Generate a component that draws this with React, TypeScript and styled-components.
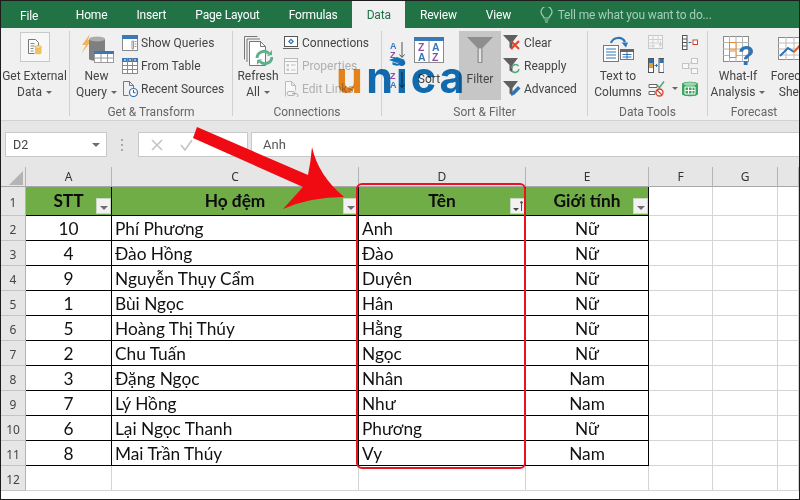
import styled, { createGlobalStyle } from 'styled-components'

const GlobalStyle = createGlobalStyle`
  html, body {
    margin: 0;
    padding: 0;
    background: #fff;
  }
`

const Page = styled.div`
  position: relative;
  box-sizing: border-box;
  width: 800px;
  height: 500px;
  border: 1px solid #1c1c1c;
  overflow: hidden;
  background: #fff;
  font-family: Roboto, 'Noto Sans', sans-serif;
`

// tabs

const TabBar = styled.div`
  display: flex;
  align-items: stretch;
  height: 27px;
  background: #217346;
  font-size: 12px;
  letter-spacing: -0.15px;
`

const Tab = styled.div<{ $active?: boolean; $first?: boolean }>`
  display: flex;
  align-items: center;
  padding: ${(p) => (p.$first ? '2px 19px 0 19px' : '0 14.5px')};
  margin-right: ${(p) => (p.$first ? '4px' : '0')};
  color: ${(p) => (p.$active ? '#217346' : '#fff')};
  background: ${(p) => (p.$active ? '#f0f0f0' : 'transparent')};
`

const TellMe = styled.div`
  display: flex;
  align-items: center;
  gap: 5px;
  margin-left: 14px;
  color: #a6cdb8;
`

// ribbon

const Ribbon = styled.div`
  display: flex;
  height: 93px;
  box-sizing: border-box;
  background: #f0f0f0;
  border-bottom: 1px solid #d2d2d2;
  color: #444;
  font-size: 12px;
`

const Group = styled.div<{ $w: number }>`
  position: relative;
  display: flex;
  flex-direction: column;
  flex: 0 0 auto;
  box-sizing: border-box;
  width: ${(p) => p.$w}px;
  margin: 3px 0 4px;
  border-right: 1px solid #d0d0d0;
  &:last-child {
    border-right: none;
    flex: 1 0 auto;
  }
`

const GroupBody = styled.div`
  display: flex;
  flex: 1;
  align-items: flex-start;
  white-space: nowrap;
`

const GroupLabel = styled.div`
  height: 15px;
  margin-bottom: -4px;
  line-height: 15px;
  text-align: center;
  color: #666;
  font-size: 12px;
`

const LargeButton = styled.div<{ $w: number; $ml?: number; $active?: boolean }>`
  display: flex;
  flex-direction: column;
  align-items: center;
  flex: 0 0 auto;
  width: ${(p) => p.$w}px;
  height: 69px;
  margin-left: ${(p) => p.$ml ?? 0}px;
  background: ${(p) => (p.$active ? '#c6c6c6' : 'transparent')};
  line-height: 16px;
`

const IconSlot = styled.div<{ $h?: number; $top?: number }>`
  display: flex;
  align-items: flex-start;
  justify-content: center;
  box-sizing: border-box;
  height: ${(p) => p.$h ?? 40}px;
  padding-top: ${(p) => p.$top ?? 2}px;
`

const ExternalBox = styled.div`
  display: flex;
  align-items: center;
  justify-content: center;
  width: 30px;
  height: 30px;
  box-sizing: border-box;
  border: 1px solid #c8c8c8;
  background: #f7f7f7;
`

const Caret = styled.span`
  display: inline-block;
  width: 0;
  height: 0;
  margin-left: 4px;
  vertical-align: 2px;
  border-left: 3px solid transparent;
  border-right: 3px solid transparent;
  border-top: 3px solid #666;
`

const SmallColumn = styled.div<{ $ml?: number }>`
  display: flex;
  flex-direction: column;
  margin-left: ${(p) => p.$ml ?? 0}px;
`

const SmallRow = styled.div<{ $muted?: boolean }>`
  display: flex;
  align-items: center;
  gap: 3px;
  height: 23px;
  color: ${(p) => (p.$muted ? '#b0b0b0' : '#444')};
  svg {
    flex: 0 0 auto;
  }
`

const SortColumn = styled.div`
  display: flex;
  flex-direction: column;
  gap: 12px;
  margin: 10px 6px 0 8px;
`

const IconGrid = styled.div`
  display: grid;
  grid-template-columns: 24px 10px 16px;
  grid-auto-rows: 23px;
  align-items: center;
  justify-items: start;
`

const MiniCaret = styled(Caret)`
  margin-left: 0;
`

// unica watermark over the ribbon

const Logo = styled.div`
  position: absolute;
  left: 335px;
  top: 48px;
  display: flex;
  font-family: Inter, 'Noto Sans', sans-serif;
  font-weight: 700;
  font-size: 43px;
  line-height: 56px;
  letter-spacing: 3px;
  color: #1271b8;
  mix-blend-mode: multiply;
`

const LogoU = styled.span`
  color: #f28a1e;
  margin-right: 0.5px;
`

const LogoHat = styled.svg`
  position: absolute;
  left: 388px;
  top: 56px;
`

// formula bar

const FormulaBar = styled.div`
  display: flex;
  align-items: stretch;
  height: 46px;
  box-sizing: border-box;
  padding: 11px 0 10px 4px;
  background: #e6e6e6;
  font-size: 12.5px;
  color: #444;
`

const NameBox = styled.div`
  display: flex;
  align-items: center;
  justify-content: space-between;
  box-sizing: border-box;
  width: 102px;
  padding: 0 6px 0 7px;
  background: #fff;
  border: 1px solid #c8c8c8;
`

const Grip = styled.div`
  width: 31px;
  display: flex;
  align-items: center;
  justify-content: center;
`

const FormulaButtons = styled.div`
  display: flex;
  align-items: center;
  gap: 17px;
  box-sizing: border-box;
  width: 110px;
  padding-left: 12px;
  margin-right: 3px;
  background: #fff;
  border: 1px solid #c8c8c8;
`

const FormulaInput = styled.div`
  flex: 1;
  display: flex;
  align-items: center;
  padding-left: 11px;
  background: #fff;
  border: 1px solid #c8c8c8;
  border-right: none;
  color: #555;
  font-size: 13px;
`

// sheet

const Sheet = styled.div`
  display: grid;
  grid-template-columns: 25px 86px 247px 167px 123px 64px 65px 1fr;
  grid-template-rows: 20px 29px repeat(11, 25px);
  font-family: Lato, 'Noto Sans', sans-serif;
  font-size: 17.3px;
  color: #111;
`

const Corner = styled.div`
  display: flex;
  align-items: flex-end;
  justify-content: flex-end;
  box-sizing: border-box;
  padding: 0 2px 1px 0;
  background: #e6e6e6;
  border-right: 1px solid #b4b4b4;
  border-bottom: 1px solid #a8a8a8;
`

const ColHead = styled.div`
  display: flex;
  align-items: center;
  justify-content: center;
  box-sizing: border-box;
  background: #e6e6e6;
  border-right: 1px solid #b4b4b4;
  border-bottom: 1px solid #a8a8a8;
  font-family: 'Noto Sans', sans-serif;
  font-size: 12px;
  color: #333;
`

const RowHead = styled.div`
  display: flex;
  align-items: center;
  justify-content: center;
  box-sizing: border-box;
  padding-top: 2px;
  background: #e6e6e6;
  border-right: 1px solid #b4b4b4;
  border-bottom: 1px solid #c4c4c4;
  font-family: 'Noto Sans', sans-serif;
  font-size: 12px;
  color: #444;
`

const HeadCell = styled.div`
  position: relative;
  display: flex;
  align-items: center;
  justify-content: center;
  box-sizing: border-box;
  padding-bottom: 1px;
  background: #70ad47;
  border-right: 1px solid #000;
  border-bottom: 1px solid #000;
  font-weight: 700;
  color: #0c0c0c;
`

const DataCell = styled.div<{ $center?: boolean }>`
  display: flex;
  align-items: center;
  justify-content: ${(p) => (p.$center ? 'center' : 'flex-start')};
  box-sizing: border-box;
  padding-left: ${(p) => (p.$center ? 0 : 3)}px;
  background: #fff;
  border-right: 1px solid #000;
  border-bottom: 1px solid #000;
`

const EmptyCell = styled.div`
  box-sizing: border-box;
  border-right: 1px solid #d4d4d4;
  border-bottom: 1px solid #d4d4d4;
`

const FilterButton = styled.div`
  position: absolute;
  right: 0;
  bottom: 1px;
  display: flex;
  align-items: center;
  justify-content: center;
  gap: 1px;
  box-sizing: border-box;
  width: 15px;
  height: 16px;
  background: #f2f2f2;
  border: 1px solid #c9d6c0;
`

const FilterCaret = styled.span`
  width: 0;
  height: 0;
  margin-top: 3px;
  border-left: 4px solid transparent;
  border-right: 4px solid transparent;
  border-top: 4px solid #6e6e6e;
`

const NameCaret = styled(FilterCaret)`
  margin-top: 0;
`

const SortedCaret = styled(FilterCaret)`
  margin-top: 7px;
  border-left-width: 3px;
  border-right-width: 3px;
  border-top-width: 3px;
  border-top-color: #444;
`

// drawn annotations, they lie over the sheet

const Annotation = styled.svg`
  position: absolute;
  left: 0;
  top: 0;
  pointer-events: none;
`

const Highlight = styled.div`
  position: absolute;
  left: 355px;
  top: 182px;
  width: 170px;
  height: 286px;
  box-sizing: border-box;
  border: 2px solid #e8131f;
  border-radius: 6px;
  pointer-events: none;
`

// ribbon icons

const blue = '#3b78b8'
const pale = '#c4c4c4'

const IconExternal = () => (
  <svg width="18" height="18" viewBox="0 0 18 18">
    <path d="M2.5 1.5h7l3 3v4M2.5 1.5v14h6" fill="#fff" stroke="#777" />
    <path d="M4.5 5.5h4M4.5 8h4M4.5 10.5h3M4.5 13h3" stroke="#888" />
    <path d="M9 9v6.5c0 1 6.5 1 6.5 0V9z" fill="#efc25e" />
    <ellipse cx="12.2" cy="9" rx="3.3" ry="1.5" fill="#f7d88f" stroke="#e0ab3f" strokeWidth="0.6" />
  </svg>
)

const IconNewQuery = () => (
  <svg width="34" height="30" viewBox="0 0 34 30">
    <path d="M10 1 2 12h4L1 21 12 7H8z" fill="#f1b460" />
    <path d="M9 6v20c0 2.4 16 2.4 16 0V6z" fill="#7f7f7f" />
    <ellipse cx="17" cy="6" rx="8" ry="2.6" fill="#adadad" />
    <rect x="14.5" y="18.5" width="19" height="11" fill="#fff" stroke="#9a9a9a" />
    <rect x="14" y="18" width="20" height="3" fill={blue} />
    <path d="M21 21v8M27.5 21v8M15 25h18" stroke="#9a9a9a" />
  </svg>
)

const IconShowQueries = () => (
  <svg width="16" height="16" viewBox="0 0 16 16">
    <rect x="0.5" y="1.5" width="15" height="14" fill="#fff" stroke="#8a8a8a" />
    <rect x="0" y="0" width="16" height="4" fill={blue} />
    <path d="M10 6h1.5v8H10zM12.5 6.5h2M12.5 9h2M12.5 11.5h2" stroke="#999" fill="none" />
  </svg>
)

const IconFromTable = () => (
  <svg width="16" height="16" viewBox="0 0 16 16">
    <rect x="0.5" y="0.5" width="15" height="15" fill="#fff" stroke="#8a8a8a" />
    <rect x="0" y="0" width="16" height="4" fill={blue} />
    <path d="M5.5 0v16M10.5 0v16M0 7.5h16M0 11.5h16" stroke="#8a8a8a" />
    <path d="M2 2h2M7 2h2M12 2h2" stroke="#fff" />
  </svg>
)

const IconRecent = () => (
  <svg width="16" height="16" viewBox="0 0 16 16">
    <path d="M1.5 14.5V.5h6l4 4v3M7.5.5v4h4M1.5 14.5h5" fill="none" stroke="#777" />
    <circle cx="11.5" cy="11.5" r="4" fill="#fff" stroke="#2f75b5" strokeWidth="1.2" />
    <path d="M11.5 9v2.7h2" fill="none" stroke="#555" />
  </svg>
)

const IconRefresh = () => (
  <svg width="30" height="32" viewBox="0 0 30 32">
    <path d="M1.5 1.5h13M1.5 1.5v23M4 4h13M4 4v23" fill="none" stroke="#777" />
    <path d="M6.5 6.5h11l5 5v19h-16z" fill="#fff" stroke="#777" />
    <path d="M17.5 6.5v5h5" fill="none" stroke="#777" />
    <path d="M14 23a7 7 0 0 1 12-4.5" fill="none" stroke="#5fb08a" strokeWidth="3" />
    <path d="M29 22a7 7 0 0 1-12 4.5" fill="none" stroke="#5fb08a" strokeWidth="3" />
    <path d="M24 21l5-1v-5zM19 24l-5 1v5z" fill="#5fb08a" />
  </svg>
)

const IconConnections = () => (
  <svg width="16" height="16" viewBox="0 0 16 16">
    <rect x="1.5" y="1.5" width="13" height="10" fill="#fff" stroke="#555" />
    <path d="M8 3.5 11 6.5 8 9.5 5 6.5z" fill="#2f75b5" />
    <circle cx="8" cy="6.5" r="1" fill="#fff" />
    <path d="M0 13.5h16" stroke="#666" />
  </svg>
)

const IconProperties = () => (
  <svg width="16" height="16" viewBox="0 0 16 16">
    <rect x="1.5" y="0.5" width="13" height="15" fill="#f8f8f8" stroke="#bcbcbc" />
    <path d="M1.5 3.5h13" stroke="#bcbcbc" />
    <rect x="3.5" y="6" width="2.5" height="2.5" fill="#c8c8c8" />
    <rect x="3.5" y="10.5" width="2.5" height="2.5" fill="#c8c8c8" />
    <path d="M8 7h4.5M8 12h4.5" stroke="#c0c0c0" />
  </svg>
)

const IconEditLinks = () => (
  <svg width="16" height="16" viewBox="0 0 16 16">
    <path d="M2.5 15.5V.5h6l4 4v5M8.5.5v4h4" fill="#f8f8f8" stroke="#bcbcbc" />
    <path d="M6 10.5h4a2 2 0 0 1 0 4H6a2 2 0 0 1 0-4zM9 12.5h4a2 2 0 0 1 0 4H9" fill="none" stroke="#b0b0b0" />
  </svg>
)

const SortSmall = ({ top, bottom }: { top: string; bottom: string }) => (
  <svg width="16" height="18" viewBox="0 0 16 18" fontFamily="Liberation Sans, sans-serif" fontWeight="700" fontSize="9">
    <text x="0" y="8" fill={top === 'A' ? blue : '#8e4ea5'}>{top}</text>
    <text x="0" y="17" fill={bottom === 'A' ? blue : '#8e4ea5'}>{bottom}</text>
    <path d="M12 1v15M9.5 13.5 12 16.5 14.5 13.5" fill="none" stroke="#555" />
  </svg>
)

const IconSortBig = () => (
  <svg width="30" height="26" viewBox="0 0 30 26" fontFamily="Liberation Sans, sans-serif" fontWeight="700" fontSize="10.5">
    <rect x="0.5" y="0.5" width="29" height="25" fill="#fff" stroke="#8a8a8a" />
    <rect x="0" y="0" width="30" height="4" fill={blue} />
    <path d="M15 4v22" stroke="#8a8a8a" />
    <text x="4" y="14" fill="#8e4ea5">Z</text>
    <text x="4" y="24" fill={blue}>A</text>
    <text x="18" y="14" fill={blue}>A</text>
    <text x="18" y="24" fill="#8e4ea5">Z</text>
  </svg>
)

const IconFunnel = () => (
  <svg width="28" height="28" viewBox="0 0 28 28">
    <path d="M1 1h26L16.5 12v15h-5V12z" fill="#8e8e8e" />
    <path d="M12.8 12.5v13.5h2.4V12.5z" fill="#e4e4e4" />
  </svg>
)

const SmallFunnel = () => <path d="M0 1h15L9.5 8v7.5l-3-2V8z" fill="#5f5f5f" />

const IconClear = () => (
  <svg width="18" height="17" viewBox="0 0 18 17">
    <SmallFunnel />
    <path d="M8 7l8 8M16 7l-8 8" stroke="#e0442a" strokeWidth="2" />
  </svg>
)

const IconReapply = () => (
  <svg width="18" height="17" viewBox="0 0 18 17">
    <SmallFunnel />
    <path d="M8.5 11a4 4 0 0 1 7-2M16 12a4 4 0 0 1-7 2" fill="none" stroke="#4fa77c" strokeWidth="1.6" />
  </svg>
)

const IconAdvanced = () => (
  <svg width="18" height="17" viewBox="0 0 18 17">
    <SmallFunnel />
    <path d="M8 16l1-4 6-6 2.5 2.5-6 6z" fill="#2f75b5" />
  </svg>
)

const IconTextColumns = () => (
  <svg width="31" height="26" viewBox="0 0 31 26">
    <path d="M8 7c2-6 11-7 14-1" fill="none" stroke="#2f75b5" strokeWidth="2.2" />
    <path d="M18.5 6.5h6.500l-2 5z" fill="#2f75b5" />
    <rect x="0.5" y="9.5" width="15" height="16" fill="#fff" stroke="#777" />
    <path d="M3 13h10M3 16h10M3 19h10M3 22h10" stroke="#2f75b5" />
    <rect x="17.5" y="13.5" width="13" height="10" fill="#fff" stroke="#777" />
    <rect x="17" y="13" width="14" height="3" fill="#666" />
    <path d="M24 16v7M19.5 18.5h9M19.5 21h9" stroke="#2f75b5" />
  </svg>
)

const IconFlash = () => (
  <svg width="16" height="15" viewBox="0 0 16 15">
    <rect x="0.5" y="0.5" width="14" height="13" fill="#f6f6f6" stroke="#c8c8c8" />
    <path d="M0 4.5h15M0 8h10M0 11h7M5 0v14M10 0v8" stroke="#d0d0d0" />
    <path d="M13 5l-3 5h2l-1 4 4-6h-2z" fill="#d4d4d4" />
  </svg>
)

const IconDuplicates = () => (
  <svg width="16" height="15" viewBox="0 0 16 15">
    <rect x="0.5" y="0.5" width="5" height="14" fill="#fff" stroke="#555" />
    <rect x="11" y="0.5" width="5" height="14" fill="#fff" stroke="#555" />
    <rect x="1" y="1" width="4" height="4" fill="#2f6fb0" />
    <rect x="1" y="5" width="4" height="5" fill="#d9a03f" />
    <rect x="11.5" y="1" width="4" height="4" fill="#2f6fb0" />
    <path d="M6.5 7.5h3M8 6l1.5 1.5L8 9" fill="none" stroke="#2f75b5" />
  </svg>
)

const IconValidation = () => (
  <svg width="17" height="16" viewBox="0 0 17 16">
    <path d="M1 3.5h8v3H1zM1 10.5h6v3H1z" fill="#fff" stroke="#666" />
    <path d="M9 4l2.5 2.5L16 .5" fill="none" stroke="#4fa77c" strokeWidth="1.5" />
    <circle cx="11.5" cy="11.5" r="3.5" fill="#fff" stroke="#d8412a" strokeWidth="1.3" />
    <path d="M9 9l5 5" stroke="#d8412a" strokeWidth="1.3" />
  </svg>
)

const IconConsolidate = () => (
  <svg width="16" height="15" viewBox="0 0 16 15">
    <rect x="0.5" y="0.5" width="4.5" height="14" fill="#fff" stroke="#555" />
    <path d="M0 4h5M0 7.5h5M0 11h5" stroke="#555" />
    <path d="M6.5 7.5h3" stroke="#2f75b5" />
    <rect x="11" y="5" width="4.5" height="4.5" fill="#fff" stroke="#d8412a" />
  </svg>
)

const IconRelations = () => (
  <svg width="16" height="16" viewBox="0 0 16 16">
    <rect x="0.5" y="5.5" width="6" height="5" fill="#f8f8f8" stroke={pale} />
    <rect x="9.5" y="0.5" width="6" height="5" fill="#f8f8f8" stroke={pale} />
    <rect x="9.5" y="10.5" width="6" height="5" fill="#f8f8f8" stroke={pale} />
    <path d="M6.5 7 9.5 4M6.5 9 9.5 12" stroke={pale} />
  </svg>
)

const IconDataModel = () => (
  <svg width="16" height="16" viewBox="0 0 16 16">
    <path d="M0 3c0-3 16-3 16 0v10c0 3-16 3-16 0z" fill="#3ea560" />
    <ellipse cx="8" cy="3" rx="6.5" ry="1.8" fill="#9ed6ae" />
    <path d="M3 6h10v7H3zM6.5 6v7M10 6v7M3 9.5h10" fill="none" stroke="#fff" />
  </svg>
)

const IconWhatIf = () => (
  <svg width="31" height="30" viewBox="0 0 31 30" fontFamily="Liberation Sans, sans-serif" fontWeight="700">
    <rect x="0.5" y="0.5" width="25" height="25" fill="#fff" stroke="#8a8a8a" />
    <path d="M6.5 0v26M13 0v26M19.5 0v26M0 6.5h26M0 13h26M0 19.5h26" stroke="#b4b4b4" />
    <rect x="6.5" y="6.5" width="6.5" height="6.5" fill="#fff" stroke="#e08a30" />
    <rect x="6.5" y="15" width="6.5" height="6.5" fill="#fff" stroke="#e08a30" />
    <text x="15" y="29" fontSize="27" fill="#2f75b5">?</text>
  </svg>
)

const IconForecast = () => (
  <svg width="32" height="26" viewBox="0 0 32 26">
    <rect x="0.5" y="0.5" width="31" height="22" fill="#fff" stroke="#8a8a8a" />
    <path d="M8 0v23M16 0v23M24 0v23M0 6h32M0 12h32M0 18h32" stroke="#bcbcbc" />
    <path d="M2 19l8-8 6 4" fill="none" stroke="#2f75b5" strokeWidth="2" />
    <path d="M16 15l8-9 8 2" fill="none" stroke="#e0602e" strokeWidth="2" />
  </svg>
)

const IconBulb = () => (
  <svg width="13" height="16" viewBox="0 0 13 16">
    <path d="M4 11c0-2-3-3-3-6a5.5 5.5 0 0 1 11 0c0 3-3 4-3 6z" fill="none" stroke="#a6cdb8" strokeWidth="1.2" />
    <path d="M4.5 13h4M5 15h3" stroke="#a6cdb8" strokeWidth="1.2" />
  </svg>
)

const tabs = ['Home', 'Insert', 'Page Layout', 'Formulas']

const columns = ['A', 'C', 'D', 'E', 'F', 'G', 'H']

const rows = [
  { stt: 10, ho: 'Phí Phương', ten: 'Anh', gender: 'Nữ' },
  { stt: 4, ho: 'Đào Hồng', ten: 'Đào', gender: 'Nữ' },
  { stt: 9, ho: 'Nguyễn Thụy Cẩm', ten: 'Duyên', gender: 'Nữ' },
  { stt: 1, ho: 'Bùi Ngọc', ten: 'Hân', gender: 'Nữ' },
  { stt: 5, ho: 'Hoàng Thị Thúy', ten: 'Hằng', gender: 'Nữ' },
  { stt: 2, ho: 'Chu Tuấn', ten: 'Ngọc', gender: 'Nữ' },
  { stt: 3, ho: 'Đặng Ngọc', ten: 'Nhân', gender: 'Nam' },
  { stt: 7, ho: 'Lý Hồng', ten: 'Như', gender: 'Nam' },
  { stt: 6, ho: 'Lại Ngọc Thanh', ten: 'Phương', gender: 'Nữ' },
  { stt: 8, ho: 'Mai Trần Thúy', ten: 'Vy', gender: 'Nam' },
]

const TrailingCells = () => (
  <>
    <EmptyCell />
    <EmptyCell />
    <EmptyCell />
  </>
)

function RowCells({ index, row }: { index: number; row: (typeof rows)[number] }) {
  return (
    <>
      <RowHead>{index}</RowHead>
      <DataCell $center>{row.stt}</DataCell>
      <DataCell>{row.ho}</DataCell>
      <DataCell>{row.ten}</DataCell>
      <DataCell $center>{row.gender}</DataCell>
      <TrailingCells />
    </>
  )
}

export default function App() {
  return (
    <Page>
      <GlobalStyle />
      <TabBar>
        <Tab $first>File</Tab>
        {tabs.map((t) => (
          <Tab key={t}>{t}</Tab>
        ))}
        <Tab $active>Data</Tab>
        <Tab>Review</Tab>
        <Tab>View</Tab>
        <TellMe>
          <IconBulb />
          Tell me what you want to do...
        </TellMe>
      </TabBar>

      <Ribbon>
        <Group $w={69}>
          <GroupBody>
            <LargeButton $w={67}>
              <IconSlot $h={37} $top={1}>
                <ExternalBox>
                  <IconExternal />
                </ExternalBox>
              </IconSlot>
              <div>Get External</div>
              <div>
                Data<Caret />
              </div>
            </LargeButton>
          </GroupBody>
        </Group>

        <Group $w={163}>
          <GroupBody>
            <LargeButton $w={51} $ml={1}>
              <IconSlot>
                <IconNewQuery />
              </IconSlot>
              <div>New</div>
              <div>
                Query<Caret />
              </div>
            </LargeButton>
            <SmallColumn>
              <SmallRow>
                <IconShowQueries />
                Show Queries
              </SmallRow>
              <SmallRow>
                <IconFromTable />
                From Table
              </SmallRow>
              <SmallRow>
                <IconRecent />
                Recent Sources
              </SmallRow>
            </SmallColumn>
          </GroupBody>
          <GroupLabel>Get &amp; Transform</GroupLabel>
        </Group>

        <Group $w={149}>
          <GroupBody>
            <LargeButton $w={50}>
              <IconSlot $top={4}>
                <IconRefresh />
              </IconSlot>
              <div>Refresh</div>
              <div>
                All<Caret />
              </div>
            </LargeButton>
            <SmallColumn>
              <SmallRow>
                <IconConnections />
                Connections
              </SmallRow>
              <SmallRow $muted>
                <IconProperties />
                Properties
              </SmallRow>
              <SmallRow $muted>
                <IconEditLinks />
                Edit Links
              </SmallRow>
            </SmallColumn>
          </GroupBody>
          <GroupLabel>Connections</GroupLabel>
        </Group>

        <Group $w={206}>
          <GroupBody>
            <SortColumn>
              <SortSmall top="A" bottom="Z" />
              <SortSmall top="Z" bottom="A" />
            </SortColumn>
            <LargeButton $w={34}>
              <IconSlot $top={6}>
                <IconSortBig />
              </IconSlot>
              <div>Sort</div>
            </LargeButton>
            <LargeButton $w={42} $ml={13} $active>
              <IconSlot $top={5}>
                <IconFunnel />
              </IconSlot>
              <div>Filter</div>
            </LargeButton>
            <SmallColumn $ml={2}>
              <SmallRow>
                <IconClear />
                Clear
              </SmallRow>
              <SmallRow>
                <IconReapply />
                Reapply
              </SmallRow>
              <SmallRow>
                <IconAdvanced />
                Advanced
              </SmallRow>
            </SmallColumn>
          </GroupBody>
          <GroupLabel>Sort &amp; Filter</GroupLabel>
        </Group>

        <Group $w={120}>
          <GroupBody>
            <LargeButton $w={60}>
              <IconSlot $top={5}>
                <IconTextColumns />
              </IconSlot>
              <div>Text to</div>
              <div>Columns</div>
            </LargeButton>
            <IconGrid>
              <IconFlash />
              <span />
              <IconConsolidate />
              <IconDuplicates />
              <span />
              <IconRelations />
              <IconValidation />
              <MiniCaret />
              <IconDataModel />
            </IconGrid>
          </GroupBody>
          <GroupLabel>Data Tools</GroupLabel>
        </Group>

        <Group $w={92}>
          <GroupBody>
            <LargeButton $w={60}>
              <IconSlot $top={5}>
                <IconWhatIf />
              </IconSlot>
              <div>What-If</div>
              <div>
                Analysis<Caret />
              </div>
            </LargeButton>
            <LargeButton $w={56} $ml={-2}>
              <IconSlot $top={6}>
                <IconForecast />
              </IconSlot>
              <div>Forecast</div>
              <div>Sheet</div>
            </LargeButton>
          </GroupBody>
          <GroupLabel>Forecast</GroupLabel>
        </Group>
      </Ribbon>

      <FormulaBar>
        <NameBox>
          D2
          <NameCaret />
        </NameBox>
        <Grip>
          <svg width="3" height="12" viewBox="0 0 3 12">
            <path d="M0 0h2v2H0zM0 5h2v2H0zM0 10h2v2H0z" fill="#a8a8a8" />
          </svg>
        </Grip>
        <FormulaButtons>
          <svg width="12" height="12" viewBox="0 0 12 12">
            <path d="M1 1l10 10M11 1 1 11" stroke="#c4c4c4" strokeWidth="1.6" />
          </svg>
          <svg width="13" height="12" viewBox="0 0 13 12">
            <path d="M1 6l4 5 7-10" fill="none" stroke="#c4c4c4" strokeWidth="1.6" />
          </svg>
        </FormulaButtons>
        <FormulaInput>Anh</FormulaInput>
      </FormulaBar>

      <Sheet>
        <Corner>
          <svg width="14" height="14" viewBox="0 0 14 14">
            <path d="M14 0v14H0z" fill="#b4b4b4" />
          </svg>
        </Corner>
        {columns.map((c) => (
          <ColHead key={c}>{c === 'H' ? '' : c}</ColHead>
        ))}

        <RowHead>1</RowHead>
        <HeadCell>
          STT
          <FilterButton>
            <FilterCaret />
          </FilterButton>
        </HeadCell>
        <HeadCell>
          Họ đệm
          <FilterButton>
            <FilterCaret />
          </FilterButton>
        </HeadCell>
        <HeadCell>
          Tên
          <FilterButton>
            <SortedCaret />
            <svg width="3" height="10" viewBox="0 0 3 10">
              <path d="M1.5 10V1M0 2.5 1.5 0 3 2.5" fill="none" stroke="#555" />
            </svg>
          </FilterButton>
        </HeadCell>
        <HeadCell>
          Giới tính
          <FilterButton>
            <FilterCaret />
          </FilterButton>
        </HeadCell>
        <TrailingCells />

        {rows.map((r, i) => (
          <RowCells key={r.stt} index={i + 2} row={r} />
        ))}

        <RowHead>12</RowHead>
        <EmptyCell />
        <EmptyCell />
        <EmptyCell />
        <EmptyCell />
        <TrailingCells />
      </Sheet>

      <Highlight />

      <Logo>
        <LogoU>u</LogoU>nica
      </Logo>
      <LogoHat width="16" height="9" viewBox="0 0 16 9">
        <path d="M8 0l8 3-8 3-8-3zM3.5 5v2.5c2 1.500 7 1.500 9 0V5L8 6.800z" fill="#1271b8" />
      </LogoHat>

      <Annotation width="800" height="500" viewBox="1 1 800 500">
        <path
          d="M197 127 193 138 303 187 283 209Q310 197 344 197 318 175 312 147 311 160 308 175Z"
          fill="#f00a12"
        />
      </Annotation>
    </Page>
  )
}
